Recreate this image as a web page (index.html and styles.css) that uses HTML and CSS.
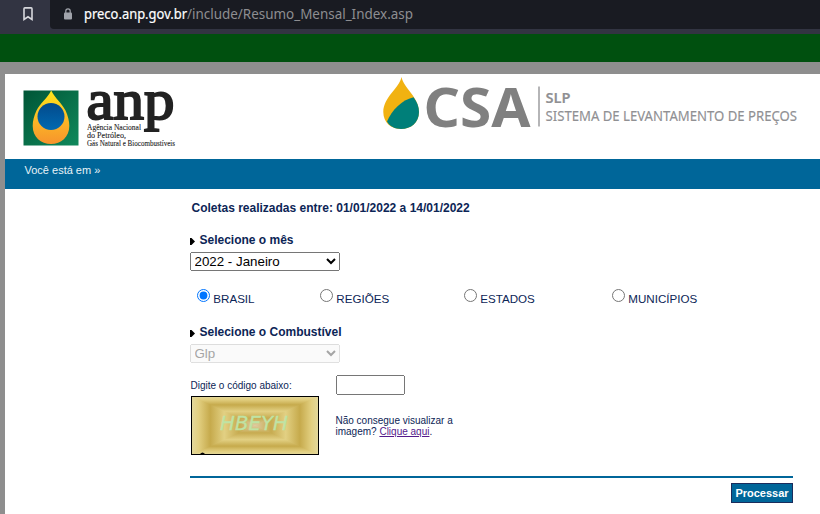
FILE: index.html
```html
<!DOCTYPE html>
<html lang="pt-BR">
<head>
<meta charset="utf-8">
<title>Resumo Mensal</title>
<link rel="stylesheet" href="styles.css">
</head>
<body>
<div class="browser">
  <svg class="bookmark" width="10" height="14" viewBox="0 0 10 14"><path d="M1 1.8Q1 .9 1.9 .9H8.1Q9 .9 9 1.8V12.5L5 9.8 1 12.5Z" fill="none" stroke="#d6d7dc" stroke-width="1.6"/></svg>
  <div class="address">
    <svg class="lock" width="8" height="12" viewBox="0 0 8 12"><rect y="4.5" width="8" height="7" rx="1" fill="#a0a3ab"/><path d="M1.8 5V3a2.2 2.2 0 0 1 4.4 0V5" fill="none" stroke="#a0a3ab" stroke-width="1.2"/></svg>
    <svg class="url" width="340" height="28"><text x="0" y="19" class="host" textLength="103" lengthAdjust="spacingAndGlyphs">preco.anp.gov.br</text><text x="103" y="19" class="path" textLength="226" lengthAdjust="spacingAndGlyphs">/include/Resumo_Mensal_Index.asp</text></svg>
  </div>
</div>
<div class="green"></div>
<div class="page">
  <header class="header">
    <svg class="anp" width="154" height="60" viewBox="23 88 154 60">
      <defs>
        <linearGradient id="g1" x1="0" y1="0" x2="1" y2="1"><stop offset="0" stop-color="#005536"/><stop offset="1" stop-color="#10895c"/></linearGradient>
        <linearGradient id="g2" x1="0" y1="0" x2="0" y2="1"><stop offset="0" stop-color="#ffe51b"/><stop offset="1" stop-color="#f7932d"/></linearGradient>
        <linearGradient id="g3" x1="0" y1="0" x2="0" y2="1"><stop offset="0" stop-color="#034a8c"/><stop offset="1" stop-color="#0069b0"/></linearGradient>
      </defs>
      <rect x="23.5" y="90.500" width="55" height="55" fill="url(#g1)"/>
      <path d="M51.200 90.500C55 98 61.500 103 65.500 110.500C68 116 69.300 121 69.300 126C69.300 137 61 144 51 144S32.700 137 32.700 126C32.700 121 34 116 36.500 110.500C40.500 103 47.400 98 51.200 90.500Z" fill="url(#g2)"/>
      <circle cx="51" cy="116.500" r="13.500" fill="url(#g3)"/>
      <text class="anp-name" x="86.500" y="119" textLength="88" lengthAdjust="spacingAndGlyphs">anp</text>
      <g class="anp-sub"><text x="87" y="130" textLength="54" lengthAdjust="spacingAndGlyphs">Agência Nacional</text><text x="87" y="138" textLength="39" lengthAdjust="spacingAndGlyphs">do Petróleo,</text><text x="87" y="145.500" textLength="88" lengthAdjust="spacingAndGlyphs">Gás Natural e Biocombustíveis</text></g>
    </svg>
    <svg class="csa" width="418" height="56" viewBox="382 76 418 56">
      <path d="M401.500 77C403.500 88 419 97 419 112C419 122.500 411 129 401 129S383.300 122.500 383.300 112C383.300 97 399.500 88 401.500 77Z" fill="#f1b211"/>
      <path d="M413.500 97.200C417 102 419 106 419 112C419 122.500 411 129 401 129C395 129 389.500 126.300 387 121.500C392 110 401.500 100 413.500 97.200Z" fill="#007f79"/>
      <text class="csa-name" x="423.500" y="126.500" textLength="107" lengthAdjust="spacingAndGlyphs">CSA</text>
      <path d="M539 86.500V126.500" stroke="#b5b5b7" stroke-width="2"/>
      <text class="csa-sub strong" x="545.500" y="102.700" textLength="25" lengthAdjust="spacingAndGlyphs">SLP</text>
      <text class="csa-sub" x="545.500" y="121" textLength="251.500" lengthAdjust="spacingAndGlyphs">SISTEMA DE LEVANTAMENTO DE PREÇOS</text>
    </svg>
  </header>
  <nav class="crumb">Você está em »</nav>
  <form class="form">
    <p class="title">Coletas realizadas entre: 01/01/2022 a 14/01/2022</p>
    <label class="heading"><svg class="arrow" width="5" height="7"><path d="M0 0H1.500L5 3.500 1.500 7H0Z"/></svg>Selecione o mês</label>
    <select class="select"><option>2022 - Janeiro</option></select>
    <div class="radios">
      <label><input type="radio" name="r" checked>BRASIL</label>
      <label><input type="radio" name="r">REGIÕES</label>
      <label><input type="radio" name="r">ESTADOS</label>
      <label><input type="radio" name="r">MUNICÍPIOS</label>
    </div>
    <label class="heading"><svg class="arrow" width="5" height="7"><path d="M0 0H1.500L5 3.500 1.500 7H0Z"/></svg>Selecione o Combustível</label>
    <select class="select" disabled><option>Glp</option></select>
    <div class="captcha">
      <div class="code">
        <div class="prompt">Digite o código abaixo:</div>
        <svg class="image" width="128" height="59" viewBox="0 0 128 59">
          <defs>
            <linearGradient id="h" x1="0" x2="64" y1="0" y2="0" gradientUnits="userSpaceOnUse" spreadMethod="reflect"><stop offset="0" stop-color="#e3d9a0"/><stop offset=".12" stop-color="#e2cf80"/><stop offset=".3" stop-color="#c6aa4c"/><stop offset=".52" stop-color="#e2d083"/><stop offset=".75" stop-color="#c7ab50"/><stop offset="1" stop-color="#decba0"/></linearGradient>
            <linearGradient id="v" x1="0" x2="0" y1="0" y2="29.500" gradientUnits="userSpaceOnUse" spreadMethod="reflect"><stop offset="0" stop-color="#e3d9a0"/><stop offset=".12" stop-color="#e2cf80"/><stop offset=".3" stop-color="#c6aa4c"/><stop offset=".52" stop-color="#e2d083"/><stop offset=".75" stop-color="#c7ab50"/><stop offset="1" stop-color="#decba0"/></linearGradient>
          </defs>
          <rect width="128" height="59" fill="url(#h)"/>
          <path d="M0 0H128L0 59H128Z" fill="url(#v)"/>
          <text class="code-text" x="29" y="34" textLength="68" lengthAdjust="spacingAndGlyphs">HBEYH</text>
          <path d="M9 58Q11.500 55 14 58Z"/>
          <rect x=".5" y=".5" width="127" height="58" fill="none" stroke="#000"/>
        </svg>
      </div>
      <div class="entry">
        <input class="answer" type="text">
        <div class="help">Não consegue visualizar a<br>imagem? <a href="#">Clique aqui</a>.</div>
      </div>
    </div>
    <div class="actions"><button type="button">Processar</button></div>
  </form>
</div>
</body>
</html>
```

FILE: styles.css
```css
* { box-sizing: border-box; }
body { margin: 0; height: 514px; overflow: hidden; background: #8e8e8e; color: #0c2556; font-family: "Liberation Sans", Arial, sans-serif; }
svg { display: block; flex: none; overflow: visible; }
.browser { display: flex; height: 34px; background: #323442; }
.bookmark { margin: 7px 17px 0 23px; }
.address { display: flex; flex: 1; height: 29px; background: #191b22; border-radius: 0 0 0 4px; }
.lock { margin: 8px 12px 0 14px; }
.url { font: 14px "Noto Sans", sans-serif; }
.host { fill: #fff; stroke: #fff; stroke-width: .2; }
.path { fill: #8d8e91; }
.green { height: 28px; background: #00500f; }
.page { margin: 12px 0 0 5px; height: 440px; background: #fff; }
.header { display: flex; height: 85px; }
.anp { margin: 14px 0 0 18px; }
.csa { margin: 2px 0 0 205px; }
.anp-name { font: 58px "Liberation Serif", serif; fill: #222; stroke: #222; stroke-width: 2; }
.anp-sub { font: 8px "Liberation Serif", serif; fill: #222; stroke: #222; stroke-width: .1; }
.csa-name { font: bold 53px "Noto Sans", sans-serif; fill: #808080; }
.csa-sub { font: 14px "Noto Sans", sans-serif; fill: #909093; stroke: #909093; stroke-width: .15; }
.csa-sub.strong { font-weight: 600; }
.crumb { height: 30px; padding: 5px 0 0 19.500px; background: #006699; color: #e8f2f7; font-size: 11px; line-height: 13px; }
.form { width: 603px; margin-left: 185px; }
.title { margin: 0; padding: 12px 0 0 1.500px; font-weight: bold; font-size: 12px; line-height: 14px; }
.heading { display: flex; align-items: flex-start; gap: 4.500px; margin-top: 18px; font-weight: bold; font-size: 12px; line-height: 14px; }
.arrow { margin-top: 5px; }
.select { display: block; width: 150px; height: 19px; margin-top: 5px; text-indent: -.5px; font: 13.333px "Liberation Sans", Arial, sans-serif; }
.radios { display: grid; grid-template-columns: 123px 144px 148px auto; margin: 17px 0 0 7px; height: 19px; font-size: 11.600px; }
.radios label { display: flex; align-items: flex-start; line-height: 13px; padding-top: 4px; }
.radios input { width: 13px; height: 13px; margin: -3px 3.300px 0 0; }
.radios + .heading { margin-top: 18px; }
.captcha { display: flex; margin: 12px 0 0 1px; height: 81px; font-size: 10px; }
.code { width: 145px; }
.prompt { padding-top: 5px; margin-left: -.5px; height: 21px; line-height: 11px; }
.code-text { font: italic 20px "DejaVu Sans", sans-serif; fill: #bfe3a4; stroke: #bfe3a4; stroke-width: .3; }
.answer { display: block; width: 69px; height: 20px; }
.help { margin: 20px 0 0 -.500px; line-height: 11px; }
.help a { color: #551a8b; }
.actions { display: flex; justify-content: flex-end; margin-top: 20px; padding-top: 5px; border-top: 2px solid #006699; }
.actions button { width: 62px; height: 20px; padding: 0; border: 1px solid #1b2c5c; background: #006699; color: #fff; font: bold 11px "Liberation Sans", Arial, sans-serif; }
```
